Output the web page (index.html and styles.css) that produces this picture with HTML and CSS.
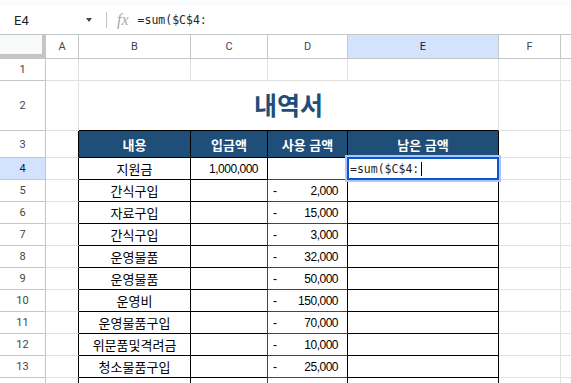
FILE: index.html
```html
<!DOCTYPE html>
<html lang="ko">
<head>
    <meta charset="UTF-8">
    <title>내역서 - Sheet</title>
    <link rel="stylesheet" href="styles.css">
</head>
<body>
    <div class="topstrip"></div>
    <div class="formula-bar">
        <div class="namebox">
            <span class="cellref">E4</span>
            <span class="dropdown"></span>
        </div>
        <div class="sep"></div>
        <span class="fx">fx</span>
        <span class="formula">=sum($C$4:</span>
    </div>

    <div class="sheet">
        <!-- column headers -->
        <div class="corner"></div>
        <div class="ch">A</div>
        <div class="ch">B</div>
        <div class="ch">C</div>
        <div class="ch">D</div>
        <div class="ch sel">E</div>
        <div class="ch">F</div>
        <div class="ch last"></div>

        <!-- row 1 -->
        <div class="rh">1</div>
        <div class="c"></div><div class="c"></div><div class="c"></div><div class="c"></div><div class="c"></div><div class="c"></div><div class="c last"></div>

        <!-- row 2 -->
        <div class="rh">2</div>
        <div class="c"></div>
        <div class="c title bB">내역서</div>
        <div class="c"></div><div class="c last"></div>

        <!-- row 3 -->
        <div class="rh">3</div>
        <div class="c bR"></div>
        <div class="c th">내용</div>
        <div class="c th">입금액</div>
        <div class="c th">사용 금액</div>
        <div class="c th">남은 금액</div>
        <div class="c"></div><div class="c last"></div>

        <!-- row 4 -->
        <div class="rh sel">4</div>
        <div class="c bR"></div>
        <div class="c ctr bR bB">지원금</div>
        <div class="c num bR bB">1,000,000</div>
        <div class="c bR gB"></div>
        <div class="c edit bR bB">
            <div class="editor">=sum($C$4:<span class="caret"></span></div>
        </div>
        <div class="c"></div><div class="c last"></div>

        <!-- row 5 -->
        <div class="rh">5</div>
        <div class="c bR"></div>
        <div class="c ctr bR bB">간식구입</div>
        <div class="c gR bB"></div>
        <div class="c acct bR gB"><span>-</span><span>2,000</span></div>
        <div class="c bR bB"></div>
        <div class="c"></div><div class="c last"></div>

        <!-- row 6 -->
        <div class="rh">6</div>
        <div class="c bR"></div>
        <div class="c ctr bR bB">자료구입</div>
        <div class="c gR bB"></div>
        <div class="c acct bR gB"><span>-</span><span>15,000</span></div>
        <div class="c bR bB"></div>
        <div class="c"></div><div class="c last"></div>

        <!-- row 7 -->
        <div class="rh">7</div>
        <div class="c bR"></div>
        <div class="c ctr bR bB">간식구입</div>
        <div class="c gR bB"></div>
        <div class="c acct bR gB"><span>-</span><span>3,000</span></div>
        <div class="c bR bB"></div>
        <div class="c"></div><div class="c last"></div>

        <!-- row 8 -->
        <div class="rh">8</div>
        <div class="c bR"></div>
        <div class="c ctr bR bB">운영물품</div>
        <div class="c gR bB"></div>
        <div class="c acct bR gB"><span>-</span><span>32,000</span></div>
        <div class="c bR bB"></div>
        <div class="c"></div><div class="c last"></div>

        <!-- row 9 -->
        <div class="rh">9</div>
        <div class="c bR"></div>
        <div class="c ctr bR bB">운영물품</div>
        <div class="c gR bB"></div>
        <div class="c acct bR gB"><span>-</span><span>50,000</span></div>
        <div class="c bR bB"></div>
        <div class="c"></div><div class="c last"></div>

        <!-- row 10 -->
        <div class="rh">10</div>
        <div class="c bR"></div>
        <div class="c ctr bR bB">운영비</div>
        <div class="c gR bB"></div>
        <div class="c acct bR gB"><span>-</span><span>150,000</span></div>
        <div class="c bR bB"></div>
        <div class="c"></div><div class="c last"></div>

        <!-- row 11 -->
        <div class="rh">11</div>
        <div class="c bR"></div>
        <div class="c ctr bR bB">운영물품구입</div>
        <div class="c gR bB"></div>
        <div class="c acct bR gB"><span>-</span><span>70,000</span></div>
        <div class="c bR bB"></div>
        <div class="c"></div><div class="c last"></div>

        <!-- row 12 -->
        <div class="rh">12</div>
        <div class="c bR"></div>
        <div class="c ctr bR bB">위문품및격려금</div>
        <div class="c gR bB"></div>
        <div class="c acct bR gB"><span>-</span><span>10,000</span></div>
        <div class="c bR bB"></div>
        <div class="c"></div><div class="c last"></div>

        <!-- row 13 -->
        <div class="rh">13</div>
        <div class="c bR"></div>
        <div class="c ctr bR bB">청소물품구입</div>
        <div class="c gR bB"></div>
        <div class="c acct bR gB"><span>-</span><span>25,000</span></div>
        <div class="c bR bB"></div>
        <div class="c"></div><div class="c last"></div>

        <!-- row 14 -->
        <div class="rh">14</div>
        <div class="c bR"></div>
        <div class="c ctr bR bB">사무실소모품구입</div>
        <div class="c gR bB"></div>
        <div class="c acct bR gB"><span>-</span><span>40,000</span></div>
        <div class="c bR bB"></div>
        <div class="c"></div><div class="c last"></div>
    </div>
</body>
</html>
```

FILE: styles.css
```css
* {
    box-sizing: border-box;
}
body {
    margin: 0;
    width: 571px;
    height: 383px;
    overflow: hidden;
    background: #fff;
    font-family: Roboto, "Noto Sans CJK KR", sans-serif;
}
.topstrip {
    height: 6px;
    background: #f9fbfd;
}
.formula-bar {
    height: 29px;
    display: flex;
    align-items: center;
    border-bottom: 1px solid #c4c7c5;
}
.namebox {
    width: 106px;
    display: flex;
    align-items: center;
    justify-content: space-between;
    padding: 0 14px;
}
.cellref {
    font-size: 13px;
    color: #1f1f1f;
}
.dropdown {
    width: 0;
    height: 0;
    border-left: 3px solid transparent;
    border-right: 3px solid transparent;
    border-top: 4px solid #444746;
}
.sep {
    width: 1px;
    height: 16px;
    background: #c4c7c5;
}
.fx {
    margin-left: 10px;
    font-family: "Liberation Serif", serif;
    font-style: italic;
    font-size: 16px;
    color: #a8a8a8;
}
.formula {
    margin-left: 9px;
    font-family: "DejaVu Sans Mono", monospace;
    font-size: 11.5px;
    color: #1f1f1f;
}
.sheet {
    display: grid;
    grid-template-columns: 46px 33px 112px 77px 80px 151px 62px 1fr;
    grid-template-rows: 24px 22px 50px 27px repeat(11, 22px);
}
.corner {
    background: #f8f9fa;
    border-right: 4px solid #c4c7c5;
    border-bottom: 5px solid #c4c7c5;
}
.ch {
    display: flex;
    align-items: center;
    justify-content: center;
    font-size: 11px;
    color: #444746;
    border-right: 1px solid #c4c7c5;
    border-bottom: 1px solid #c4c7c5;
}
.rh {
    display: flex;
    align-items: center;
    justify-content: center;
    font-size: 11px;
    color: #444746;
    border-right: 1px solid #c4c7c5;
    border-bottom: 1px solid #c4c7c5;
}
.ch.sel, .rh.sel {
    background: #d3e3fd;
    color: #041e49;
}
.c {
    display: flex;
    align-items: center;
    overflow: hidden;
    white-space: nowrap;
    font-family: "Liberation Sans", "Noto Sans CJK KR", sans-serif;
    font-size: 13px;
    color: #000;
    border-right: 1px solid #e1e1e1;
    border-bottom: 1px solid #e1e1e1;
}
.last {
    border-right: none;
}
.bR { border-right-color: #000; }
.bB { border-bottom-color: #000; }
.gR { border-right-color: #38571a; }
.gB { border-bottom-color: #38571a; }

.title {
    grid-column: span 4;
    justify-content: center;
    padding-bottom: 3px;
    font-family: "Noto Sans CJK KR", sans-serif;
    font-size: 25px;
    font-weight: bold;
    color: #1f4e79;
}
.th {
    justify-content: center;
    background: #1f4e79;
    color: #fff;
    font-family: "Noto Sans CJK KR", sans-serif;
    font-weight: bold;
    font-size: 13px;
    border-right-color: #000;
    border-bottom-color: #000;
}
.ctr {
    justify-content: center;
}
.num {
    justify-content: flex-end;
    padding-right: 9px;
    font-size: 12px;
    letter-spacing: -0.5px;
}
.acct {
    justify-content: space-between;
    padding: 0 9px 0 5px;
    font-size: 12px;
    letter-spacing: -0.5px;
}
.edit {
    position: relative;
    overflow: visible;
}
.editor {
    position: absolute;
    top: -1px;
    left: -1px;
    right: -1px;
    bottom: -1px;
    z-index: 2;
    display: flex;
    align-items: center;
    padding-left: 1px;
    background: #fff;
    border: 2px solid #0b57d0;
    box-shadow: 0 0 0 2px #a8c7fa;
    font-family: "DejaVu Sans Mono", monospace;
    font-size: 11.5px;
    color: #1f1f1f;
}
.caret {
    display: inline-block;
    width: 1px;
    height: 14px;
    margin-left: 2px;
    background: #000;
}
```
